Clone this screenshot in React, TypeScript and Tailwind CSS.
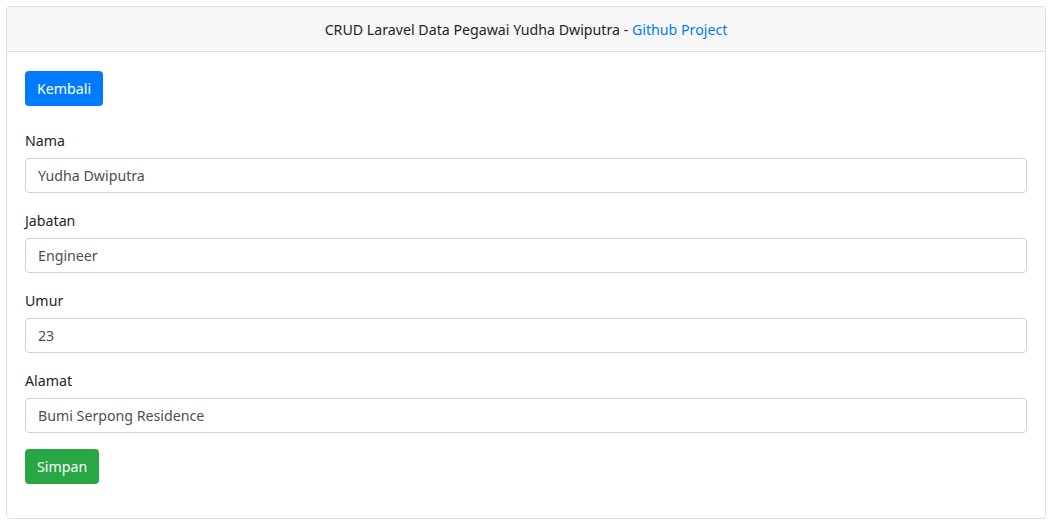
import React from "react";

interface FieldProps {
	label: string;
	value: string;
}

const Field: React.FC<FieldProps> = ({ label, value }) => {
	return (
		<div className="mb-[15px]">
			<label className="block mb-[6px] pt-[1px] leading-[23px] text-[14.2px] text-[#212529]">{label}</label>
			<input
				type="text"
				defaultValue={value}
				className="block w-full h-[35px] px-[12px] border border-[#ced4da] rounded-[4px] text-[14.2px] text-[#495057] bg-white outline-none"
			/>
		</div>
	);
};

export default function App() {
	return (
		<div className="p-[6px] bg-white" style={{ fontFamily: '"Noto Sans", "Open Sans", sans-serif' }}>
			<div className="w-[1040px] border border-[#dfdfdf] rounded-[4px] bg-white">
				{/* HEADER *************************************************** */}
				<div className="h-[45px] pt-[1px] flex items-center justify-center bg-[#f7f7f7] border-b border-[#dfdfdf] text-[14.2px] text-[#212529] rounded-t-[4px]">
					<span>
						CRUD Laravel Data Pegawai Yudha Dwiputra -{" "}
						<a href="#" className="text-[#007bff]">
							Github Project
						</a>
					</span>
				</div>

				{/* BODY *************************************************** */}
				<div className="px-[18px] pt-[19px] pb-[34px]">
					<button className="h-[35px] pt-[1px] px-[12px] rounded-[4px] bg-[#007bff] text-white text-[14.2px]">
						Kembali
					</button>

					<form className="mt-[22px]">
						<Field label="Nama" value="Yudha Dwiputra" />
						<Field label="Jabatan" value="Engineer" />
						<Field label="Umur" value="23" />
						<Field label="Alamat" value="Bumi Serpong Residence" />
						<button
							type="button"
							className="h-[35px] pt-[1px] px-[12px] rounded-[4px] bg-[#28a745] text-white text-[14.2px] mt-[1px]"
						>
							Simpan
						</button>
					</form>
				</div>
			</div>
		</div>
	);
}
